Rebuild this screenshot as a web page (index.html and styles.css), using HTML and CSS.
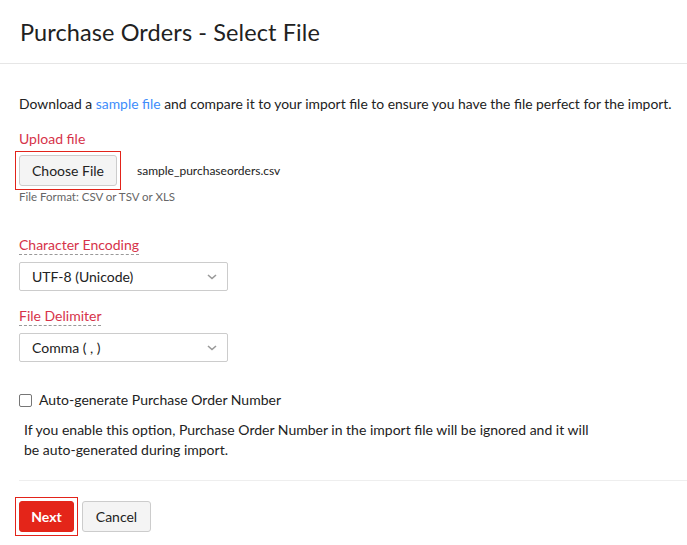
FILE: index.html
```html
<!DOCTYPE html>
<html>
<head>
<meta charset="utf-8">
<link rel="stylesheet" href="styles.css">
</head>
<body>
<div class="page">
  <header class="header">
    <h1 class="title">Purchase Orders - Select File</h1>
  </header>
  <main class="content">
    <p class="intro">Download a <a class="link" href="#">sample file</a> and compare it to your import file to ensure you have the file perfect for the import.</p>

    <div class="field upload">
      <div class="label">Upload file</div>
      <div class="file-row">
        <span class="focus-ring"><button class="btn btn-default">Choose File</button></span>
        <span class="filename">sample_purchaseorders.csv</span>
      </div>
      <div class="hint">File Format: CSV or TSV or XLS</div>
    </div>

    <div class="field field-enc">
      <div class="label"><span class="dashed">Character Encoding</span></div>
      <div class="select">
        <span>UTF-8 (Unicode)</span>
        <svg class="caret" width="10" height="6" viewBox="0 0 10 6"><path d="M1 1 L5 4.5 L9 1" fill="none" stroke="#999" stroke-width="1.6"/></svg>
      </div>
    </div>

    <div class="field field-delim">
      <div class="label"><span class="dashed">File Delimiter</span></div>
      <div class="select">
        <span>Comma ( , )</span>
        <svg class="caret" width="10" height="6" viewBox="0 0 10 6"><path d="M1 1 L5 4.5 L9 1" fill="none" stroke="#999" stroke-width="1.6"/></svg>
      </div>
    </div>

    <label class="check">
      <span class="box"></span>
      <span>Auto-generate Purchase Order Number</span>
    </label>
    <p class="note">If you enable this option, Purchase Order Number in the import file will be ignored and it will be auto-generated during import.</p>

    <footer class="footer">
      <span class="focus-ring"><button class="btn btn-primary">Next</button></span>
      <button class="btn btn-default">Cancel</button>
    </footer>
  </main>
</div>
</body>
</html>
```
FILE: styles.css
```css
* { box-sizing: border-box; }
html, body { margin: 0; padding: 0; background: #fff; }
body {
  font-family: Lato, "Open Sans", "Liberation Sans", sans-serif;
  color: #222;
  font-size: 14px;
}
.page { width: 687px; }
.header {
  height: 64px;
  border-bottom: 1px solid #e6e6e6;
  padding: 0 20px;
  display: flex;
  align-items: center;
}
.title {
  margin: 0;
  font-weight: 400;
  font-size: 23.5px;
  color: #212121;
  letter-spacing: 0.1px;
}
.content { padding: 0 0 0 19px; }
.intro { margin: 30px 0 0; line-height: 20px; font-size: 13.9px; white-space: nowrap; }
.link { color: #408dfb; text-decoration: none; }
.upload { margin-top: 15px; }
.field-enc { margin-top: 31px; }
.field-delim { margin-top: 15px; }
.label { color: #d6334a; font-size: 14px; line-height: 20px; }
.dashed { border-bottom: 1px dashed #999; padding-bottom: 1px; }
.file-row { display: flex; align-items: center; margin-top: 2px; margin-left: -4px; }
.focus-ring {
  display: inline-flex;
  border: 1px solid #e2231a;
  padding: 3px;
}
.btn {
  font-family: inherit;
  font-size: 14px;
  border-radius: 3px;
  height: 31px;
  padding: 0 12px;
  cursor: pointer;
  white-space: nowrap;
}
.btn-default {
  background: #f4f4f4;
  border: 1px solid #ccc;
  color: #222;
}
.file-row .btn-default { width: 98px; padding: 0; }
.btn-primary {
  background: #e42519;
  border: 1px solid #e42519;
  color: #fff;
  font-weight: 700;
  width: 55px;
  padding: 0;
}
.filename { font-size: 12px; margin-left: 16px; color: #222; }
.hint { font-size: 11.5px; color: #666; margin-top: 0; line-height: 14px; }
.select {
  width: 209px;
  height: 29px;
  border: 1px solid #ccc;
  border-radius: 2px;
  margin-top: 7px;
  display: flex;
  align-items: center;
  justify-content: space-between;
  padding: 0 10px 0 12px;
  font-size: 14px;
  color: #222;
}
.check {
  display: flex;
  align-items: center;
  gap: 7px;
  margin-top: 28px;
  font-size: 14px;
  line-height: 20px;
}
.box {
  width: 13px; height: 13px;
  border: 1px solid #767676;
  border-radius: 2px;
  background: #fff;
}
.note {
  margin: 10px 0 0 5px;
  width: 580px;
  font-size: 14px;
  line-height: 20px;
}
.footer {
  margin-top: 20px;
  border-top: 1px solid #eee;
  padding-top: 16px;
  display: flex;
  align-items: center;
  gap: 4px;
}
.footer .focus-ring { margin-left: -4px; }
.footer .btn-default { width: 69px; padding: 0; }
```
